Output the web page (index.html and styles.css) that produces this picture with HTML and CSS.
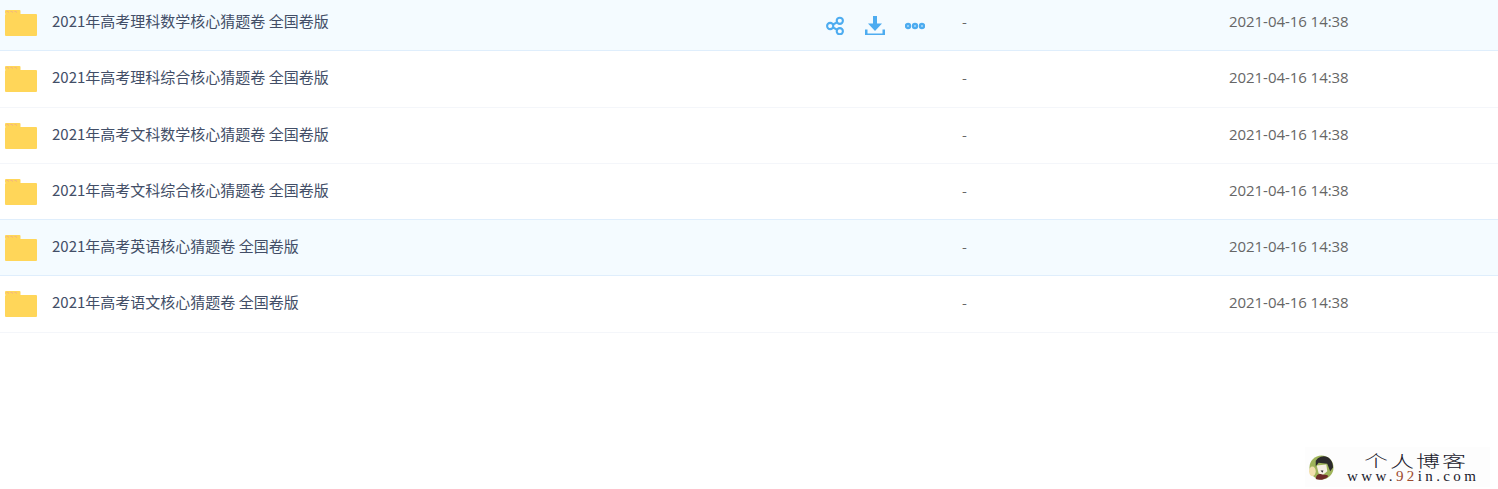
FILE: index.html
```html
<!DOCTYPE html>
<html lang="zh">
<head>
<meta charset="utf-8">
<title>文件列表</title>
<link rel="stylesheet" href="styles.css">
</head>
<body>
<svg class="defs" width="0" height="0" aria-hidden="true">
  <defs>
    <symbol id="folder" viewBox="0 0 32 26">
      <path d="M1 0h13.500a1 1 0 0 1 1 1v3H1a1 1 0 0 1-1-1V1a1 1 0 0 1 1-1z" fill="#ffd659"/>
      <path d="M1.500 1.500h12" stroke="#f3b67e" stroke-width="1" stroke-dasharray="2 2" fill="none"/>
      <path d="M3 2.500h11" stroke="#f6c070" stroke-width="1" stroke-dasharray="1 3" fill="none"/>
      <rect x="0" y="4" width="32" height="22" rx="1" fill="#ffd659"/>
    </symbol>
  </defs>
</svg>
<main class="list">
  <div class="row row-active">
    <div class="name"><svg class="folder"><use href="#folder"/></svg><span>2021年高考理科数学核心猜题卷 全国卷版</span></div>
    <div class="actions">
      <svg class="icon" viewBox="0 -1 20 24"><g fill="none" stroke="#4dacf0" stroke-width="2.100"><circle cx="5.200" cy="14" r="3.100"/><circle cx="14.800" cy="8.800" r="3.100"/><circle cx="14.800" cy="19.200" r="3.100"/><path d="M8 12.500 12 10.300M8 15.500l4 2.200"/></g></svg>
      <svg class="icon" viewBox="0 -1 20 24"><path d="M8 4h4v7.500h5L10 19 3 11.500h5z" fill="#4dacf0"/><path d="M1.200 17.500v5.200h17.600v-5.200" fill="none" stroke="#4dacf0" stroke-width="2.600"/></svg>
      <svg class="icon" viewBox="0 -1 20 24"><g fill="none" stroke="#4dacf0" stroke-width="2.400"><circle cx="3" cy="14" r="2"/><circle cx="10" cy="14" r="2"/><circle cx="17" cy="14" r="2"/></g></svg>
    </div>
    <div class="size">-</div>
    <div class="date">2021-04-16 14:38</div>
  </div>
  <div class="row row-tall">
    <div class="name"><svg class="folder"><use href="#folder"/></svg><span>2021年高考理科综合核心猜题卷 全国卷版</span></div>
    <div class="size">-</div>
    <div class="date">2021-04-16 14:38</div>
  </div>
  <div class="row">
    <div class="name"><svg class="folder"><use href="#folder"/></svg><span>2021年高考文科数学核心猜题卷 全国卷版</span></div>
    <div class="size">-</div>
    <div class="date">2021-04-16 14:38</div>
  </div>
  <div class="row row-before-active">
    <div class="name"><svg class="folder"><use href="#folder"/></svg><span>2021年高考文科综合核心猜题卷 全国卷版</span></div>
    <div class="size">-</div>
    <div class="date">2021-04-16 14:38</div>
  </div>
  <div class="row row-active">
    <div class="name"><svg class="folder"><use href="#folder"/></svg><span>2021年高考英语核心猜题卷 全国卷版</span></div>
    <div class="size">-</div>
    <div class="date">2021-04-16 14:38</div>
  </div>
  <div class="row row-tall">
    <div class="name"><svg class="folder"><use href="#folder"/></svg><span>2021年高考语文核心猜题卷 全国卷版</span></div>
    <div class="size">-</div>
    <div class="date">2021-04-16 14:38</div>
  </div>
</main>
<aside class="watermark">
  <svg class="avatar" viewBox="0 0 26 26">
    <circle cx="13" cy="13" r="12.500" fill="#9fb45a"/>
    <path d="M7 6a10 10 0 0 1 12-4c4 2 6 6 6 11l-3 4-3-8-9-1-3 4z" fill="#2c2a2c"/>
    <path d="M8 11l10-1 1 7-5 4-4-2z" fill="#f6efe4"/>
    <path d="M7 25c0-4 3-6 6-5s6 0 7 2c-2 3-9 5-13 3z" fill="#6e2a28"/>
    <ellipse cx="3.500" cy="17" rx="3.500" ry="5" fill="#f2dfae"/>
    <path d="M12 16h3l-1 2.500z" fill="#2c2a2c"/>
  </svg>
  <div class="wm-text">
    <div class="wm-title">个人博客</div>
    <div class="wm-url">www.<b>92</b>in.com</div>
  </div>
</aside>
</body>
</html>
```

FILE: styles.css
```css
* { box-sizing: border-box; }
html, body { margin: 0; height: 100%; background: #fff; overflow: hidden; }
body { font-family: "Noto Sans CJK SC", "Liberation Sans", sans-serif; position: relative; }
.defs { position: absolute; }
.list { margin-top: -5px; }
.row {
  display: flex;
  align-items: center;
  height: 56px;
  padding-top: 1px;
  border-bottom: 1px solid #f4f6fa;
  color: #424e67;
  font-size: 15px;
}
.row-tall { height: 57px; padding-bottom: 1px; }
.row-active { background: #f4fbff; border-bottom-color: #dfeefc; }
.row-before-active { border-bottom-color: #dfeefc; }
.name { display: flex; align-items: center; flex: 0 0 825px; padding-left: 5px; gap: 15px; }
.name span { line-height: 20px; margin-bottom: 4px; }
.folder { width: 32px; height: 26px; flex: none; }
.actions { display: flex; gap: 20px; }
.icon { width: 20px; height: 24px; flex: none; }
.size {
  margin-left: 137px;
  margin-bottom: 4px;
  width: 267px;
  color: #666;
  font-size: 14px;
  line-height: 20px;
}
.row-active .actions + .size { margin-left: 37px; }
.date {
  margin-bottom: 4px;
  color: #666;
  font-family: "Open Sans", "Liberation Sans", sans-serif;
  font-size: 15px;
  letter-spacing: -0.05px;
  line-height: 20px;
}
.watermark {
  position: absolute;
  right: 8px;
  bottom: 2px;
  width: 185px;
  height: 40px;
  display: flex;
  align-items: center;
  gap: 13px;
  padding-left: 4px;
  background: #fdfdfd;
}
.avatar { width: 25px; height: 25px; flex: none; }
.wm-text { font-family: "Liberation Serif", "Noto Sans CJK SC", serif; color: #20202c; }
.wm-title {
  font-family: "Noto Sans CJK SC", serif;
  font-weight: 300;
  font-size: 24px;
  line-height: 18px;
  letter-spacing: 2px;
  margin-left: 17px;
  white-space: nowrap;
  transform: scaleY(0.68);
  transform-origin: center;
}
.wm-url { font-size: 15px; line-height: 14px; letter-spacing: 3.4px; white-space: nowrap; }
.wm-url b { color: #9c4a2e; font-weight: 400; }
```
